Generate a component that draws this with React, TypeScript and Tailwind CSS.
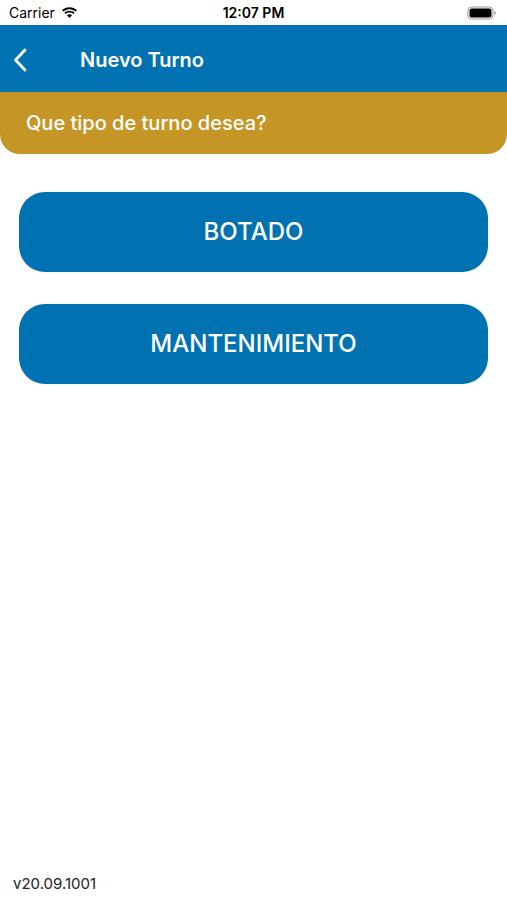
import React from "react";

const Wifi = () => (
  <svg width="17" height="12" viewBox="0 0 17 12" fill="#000">
    <path d="M8.5 2.2c2.4 0 4.6.9 6.3 2.4l1.2-1.3C14 1.4 11.4.3 8.5.3S3 1.4 1 3.3l1.2 1.3c1.7-1.5 3.9-2.4 6.3-2.4z" />
    <path d="M8.5 5.6c1.5 0 2.8.5 3.9 1.4l1.2-1.3C12.2 4.5 10.4 3.8 8.5 3.8s-3.7.7-5.1 1.9L4.6 7c1.1-.9 2.4-1.4 3.9-1.4z" />
    <path d="M8.5 7.3c-.9 0-1.8.3-2.5.9l2.5 2.7L11 8.2c-.7-.6-1.6-.9-2.5-.9z" />
  </svg>
);

const Battery = () => (
  <svg width="30" height="14" viewBox="0 0 30 14">
    <rect x="1" y="1" width="25" height="12" rx="3.5" fill="none" stroke="#999" strokeWidth="1" />
    <rect x="2.5" y="2.5" width="22" height="9" rx="2" fill="#000" />
    <path d="M27.5 5v4c.8-.3 1.3-1 1.3-2s-.5-1.7-1.3-2z" fill="#999" />
  </svg>
);

const App = () => {
  const opciones = ["BOTADO", "MANTENIMIENTO"];

  return (
    <div
      className="flex h-[900px] w-[507px] flex-col bg-white"
      style={{ fontFamily: "Inter, 'Liberation Sans', sans-serif" }}
    >
      {/* Status bar */}
      <div className="flex h-[25px] items-center justify-between px-[9px] text-[14px] text-black">
        <div className="flex w-[120px] items-center gap-[6px]">
          <span>Carrier</span>
          <Wifi />
        </div>
        <span className="font-semibold">12:07 PM</span>
        <div className="flex w-[120px] justify-end pr-[1px]">
          <Battery />
        </div>
      </div>

      {/* Header */}
      <div className="flex h-[67px] items-center bg-[#0072b1] pt-[2px] text-white">
        <div className="flex w-[80px] items-center pl-[13px]">
          <svg width="14" height="24" viewBox="0 0 14 24" fill="none">
            <path d="M12 2 2.5 12 12 22" stroke="white" strokeWidth="2.8" strokeLinecap="round" strokeLinejoin="round" />
          </svg>
        </div>
        <span className="text-[20px] font-semibold">Nuevo Turno</span>
      </div>

      {/* Question bar */}
      <div className="flex h-[62px] items-center rounded-b-[20px] bg-[#c59526] pl-[26px] text-[20px] font-medium text-white">
        Que tipo de turno desea?
      </div>

      {/* Options */}
      <div className="mt-[38px] flex flex-col gap-[32px] px-[19px]">
        {opciones.map((op) => (
          <button
            key={op}
            type="button"
            className="flex h-[80px] items-center justify-center rounded-[26px] bg-[#0072b1] text-[24px] font-medium text-white"
          >
            {op}
          </button>
        ))}
      </div>

      <div className="flex-1" />

      {/* Version */}
      <div className="pb-[5px] pl-[13px] text-[15px] text-[#222]">v20.09.1001</div>
    </div>
  );
};

export default App;
